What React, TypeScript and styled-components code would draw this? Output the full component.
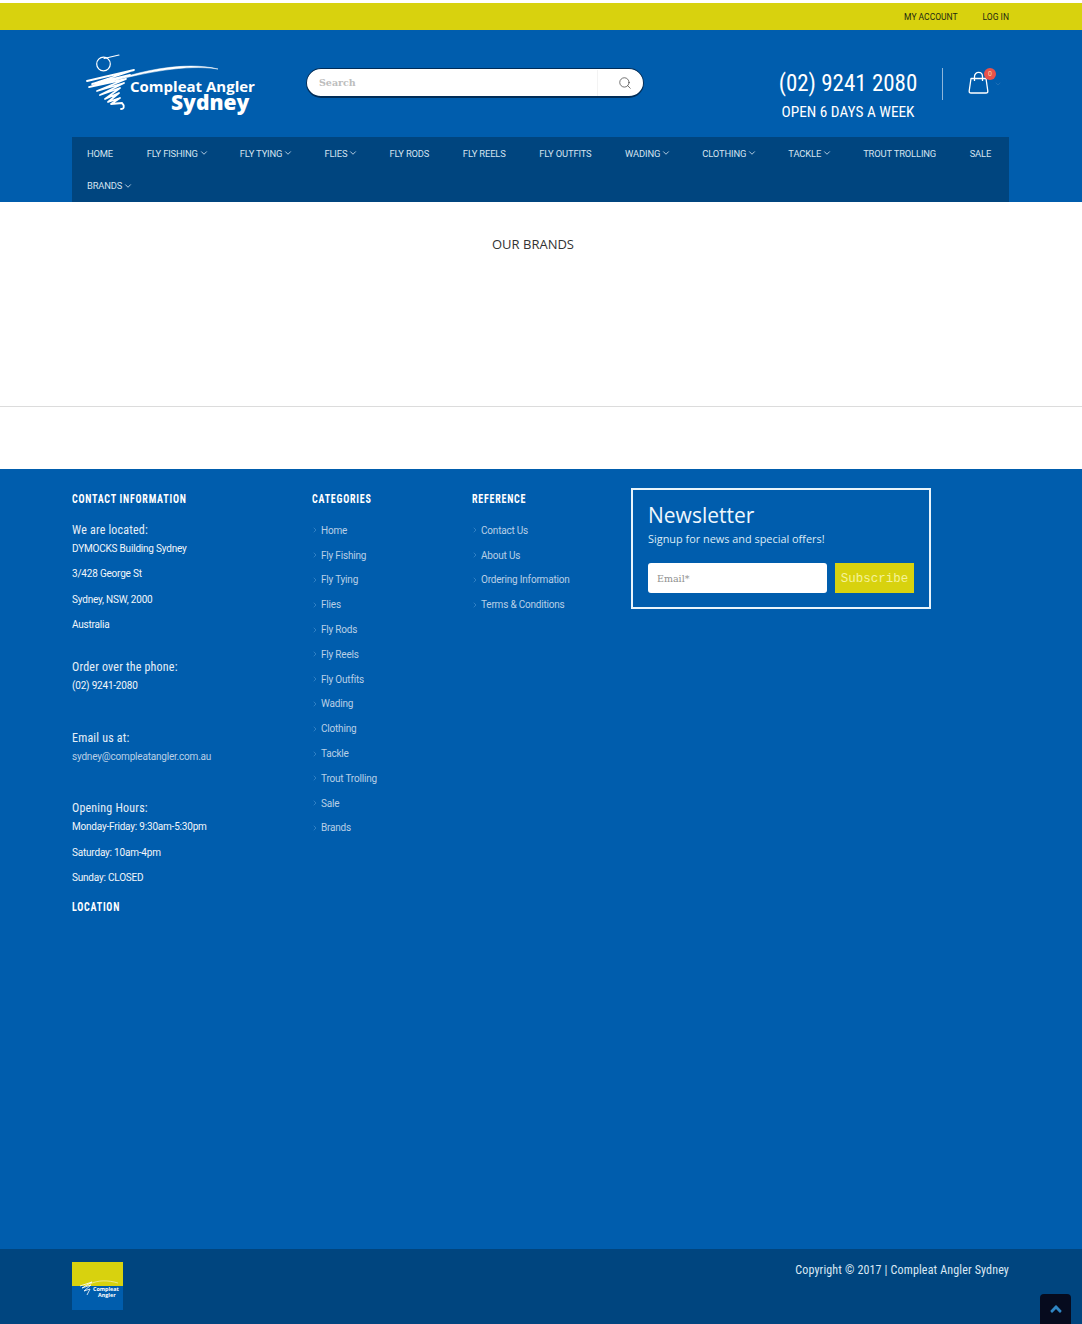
import React from "react";
import styled, {createGlobalStyle} from "styled-components";
import {FaAngleUp} from "react-icons/fa";
import {ChevronDown, ChevronRight, Search} from "lucide-react";

const condensed = `"Roboto Condensed", Roboto, "Liberation Sans", sans-serif`;
const blue = "#005dad";
const navy = "#00457f";

const GlobalStyle = createGlobalStyle`
  html, body {
    margin: 0;
    padding: 0;
    background: #fff;
  }

  body {
    font-family: Roboto, "Liberation Sans", sans-serif;
  }
`;

const Page = styled.div`
  position: relative;
  height: 1324px;
  overflow: hidden;
  padding-top: 3px;
  box-sizing: border-box;
`;

const TopBar = styled.div`
  height: 27px;
  background: #d8d20e;
  padding: 0 73px 0 72px;
  display: flex;
  justify-content: flex-end;
  align-items: center;
  gap: 25px;
`;

const TopLink = styled.a`
  font-size: 8.5px;
  font-weight: 400;
  color: #1c2a12;
  text-transform: uppercase;
`;

const Header = styled.header`
  background: ${blue};
  padding: 0 73px 0 72px;
  height: 172px;
  box-sizing: border-box;
`;

const HeaderRow = styled.div`
  height: 107px;
  display: flex;
  align-items: flex-start;
`;

const LogoSvg = styled.svg`
  width: 200px;
  height: 90px;
  margin-top: 10px;
  flex: none;
`;

const SearchBox = styled.div`
  width: 338px;
  height: 30px;
  margin: 38px 0 0 34px;
  box-sizing: border-box;
  background: #fff;
  border: 1px solid #002c57;
  border-bottom-width: 2px;
  border-radius: 16px;
  display: flex;
  align-items: center;
  flex: none;
`;

const SearchInput = styled.input`
  flex: 1;
  min-width: 0;
  border: 0;
  outline: 0;
  background: transparent;
  padding: 0 0 1px 12px;
  font-family: "DejaVu Serif", "Liberation Serif", serif;
  font-size: 9.5px;

  &::placeholder {
    color: #bdbdbd;
    font-weight: 700;
    opacity: 1;
  }
`;

const SearchButton = styled.div`
  width: 46px;
  height: 26px;
  box-sizing: border-box;
  padding-left: 9px;
  border-left: 1px solid #f3f3f3;
  display: flex;
  align-items: center;
  justify-content: center;
  color: #3a3a3a;
`;

const Phone = styled.div`
  margin-left: auto;
  width: 164px;
  margin-top: 39px;
  text-align: center;
  color: #fff;
  font-family: ${condensed};
`;

const PhoneNumber = styled.div`
  font-size: 23px;
  line-height: 30px;
`;

const OpenDays = styled.div`
  font-size: 15.3px;
  line-height: 20px;
  margin-top: 3px;
`;

const Divider = styled.div`
  width: 1px;
  height: 32px;
  background: #8fb6da;
  margin: 38px 25px 0 12px;
`;

const Cart = styled.div`
  position: relative;
  width: 41px;
  margin-top: 41px;
`;

const CartCount = styled.span`
  position: absolute;
  left: 16px;
  top: -3px;
  width: 12px;
  height: 12px;
  border-radius: 50%;
  background: #e8524a;
  color: #f6d9a8;
  font-size: 7px;
  line-height: 12px;
  text-align: center;
`;

const CartCaret = styled(ChevronDown)`
  position: absolute;
  left: 26px;
  top: 9px;
  color: #2c76b8;
`;

const Nav = styled.nav`
  height: 65px;
  background: ${navy};
`;

const NavList = styled.div`
  display: flex;
  flex-wrap: wrap;
  align-content: flex-start;
  margin-right: -8px;
`;

const NavItem = styled.a`
  height: 32.5px;
  padding: 0 18.6px 0 15px;
  display: flex;
  align-items: center;
  font-size: 9.4px;
  letter-spacing: -0.15px;
  color: #d5e3f0;
  text-transform: uppercase;
  white-space: nowrap;
`;

const NavCaret = styled(ChevronDown)`
  margin: 0 -2.5px 0 1px;
`;

const Brands = styled.section`
  height: 204px;
  border-bottom: 1px solid #dcdcdc;
`;

const BrandsTitle = styled.h2`
  margin: 0;
  padding: 33px 16px 0 0;
  font-family: "Open Sans", sans-serif;
  font-size: 13px;
  line-height: 18px;
  font-weight: 400;
  color: #333;
  text-align: center;
  text-transform: uppercase;
`;

const Spacer = styled.div`
  height: 62px;
`;

const Footer = styled.footer`
  background: ${blue};
  height: 780px;
  box-sizing: border-box;
  padding: 19px 72px 0;
  display: grid;
  grid-template-columns: 240px 160px 159px 300px;
  align-items: start;
`;

const ColumnTitle = styled.h4`
  margin: 0;
  font-family: ${condensed};
  font-size: 13px;
  line-height: 22px;
  font-weight: 700;
  letter-spacing: 1px;
  color: #fff;
  text-transform: uppercase;
  white-space: nowrap;
  transform: scaleX(0.77);
  transform-origin: left center;
`;

const ContactGroup = styled.div<{$after: number}>`
  margin-bottom: ${p => p.$after}px;

  &:first-of-type {
    margin-top: 10.5px;
  }
`;

const ContactLabel = styled.div`
  font-family: ${condensed};
  font-size: 12px;
  line-height: 18px;
  color: #e6eff7;
  letter-spacing: 0.2px;
`;

const ContactLine = styled.p<{$muted?: boolean}>`
  margin: 0 0 6px;
  font-size: 10px;
  letter-spacing: -0.2px;
  line-height: 19.5px;
  color: ${p => (p.$muted ? "#b9cfe6" : "#f2f6fa")};
`;

const LinkList = styled.ul`
  list-style: none;
  margin: 8px 0 0;
  padding: 0;
`;

const LinkRow = styled.li`
  height: 24.8px;
  display: flex;
  align-items: center;
  gap: 2px;
  font-size: 10px;
  letter-spacing: -0.2px;
  color: #b9cfe6;
`;

const LinkCaret = styled(ChevronRight)`
  color: #2f7fc4;
  margin-left: -1px;
`;

const NewsletterBox = styled.div`
  height: 121px;
  box-sizing: border-box;
  border: 2px solid #e8f4fb;
  padding: 10px 15px 0;
`;

const NewsletterTitle = styled.div`
  font-family: "Open Sans", sans-serif;
  font-size: 21px;
  line-height: 30px;
  color: #eef7fd;
`;

const NewsletterText = styled.div`
  font-family: "Open Sans", sans-serif;
  font-size: 10.9px;
  line-height: 18px;
  color: #dcebf6;
`;

const NewsletterForm = styled.div`
  display: flex;
  gap: 8px;
  margin-top: 15px;
`;

const EmailInput = styled.input`
  width: 179px;
  height: 30px;
  box-sizing: border-box;
  border: 0;
  border-radius: 3px;
  background: #fff;
  padding: 0 9px;
  font-family: "DejaVu Serif", "Liberation Serif", serif;
  font-size: 9.5px;

  &::placeholder {
    color: #8f8f8f;
    opacity: 1;
  }
`;

const SubscribeButton = styled.button`
  width: 79px;
  height: 30px;
  border: 0;
  padding: 1px 0 0;
  background: #d8d20e;
  color: #f5f29a;
  font-family: "Liberation Mono", monospace;
  font-size: 12.5px;
`;

const BottomBar = styled.div`
  background: ${navy};
  height: 75px;
  padding: 13px 73px 0 72px;
  box-sizing: border-box;
  display: flex;
  justify-content: space-between;
  align-items: flex-start;
`;

const BadgeSvg = styled.svg`
  width: 51px;
  height: 48px;
  display: block;
`;

const Copyright = styled.div`
  font-family: ${condensed};
  font-size: 12px;
  line-height: 16px;
  color: #dbe8f3;
  letter-spacing: 0.15px;
`;

const ScrollTop = styled.a`
  position: absolute;
  left: 1040px;
  top: 1294px;
  width: 31px;
  height: 34px;
  border-radius: 4px;
  background: #060b1e;
  color: #2f86c4;
  display: flex;
  justify-content: center;
  padding-top: 6px;
  box-sizing: border-box;
  font-size: 18px;
`;

const navItems = [
    {label: "Home"},
    {label: "Fly Fishing", more: true},
    {label: "Fly Tying", more: true},
    {label: "Flies", more: true},
    {label: "Fly Rods"},
    {label: "Fly Reels"},
    {label: "Fly Outfits"},
    {label: "Wading", more: true},
    {label: "Clothing", more: true},
    {label: "Tackle", more: true},
    {label: "Trout Trolling"},
    {label: "Sale"},
    {label: "Brands", more: true},
];

const categories = [
    "Home", "Fly Fishing", "Fly Tying", "Flies", "Fly Rods", "Fly Reels", "Fly Outfits",
    "Wading", "Clothing", "Tackle", "Trout Trolling", "Sale", "Brands",
];

const reference = ["Contact Us", "About Us", "Ordering Information", "Terms & Conditions"];

const Swish = () => (
    <g fill="none" stroke="#fff" strokeLinecap="round">
        <circle cx="33.5" cy="24" r="6.8" strokeWidth="1.2"/>
        <path d="M34 18.5 L49 15" strokeWidth="1.1"/>
        <path
            d="M17 41 L64 30 L22 44 L60 35 L19 47 L56 39 L27 51 L54 43 L30 55 L50 48 L35 59 L49 53 L38 62 L50 58 L41 64 L52 63 C55 66 54 69 51 69"
            strokeWidth="1.8"
            strokeLinejoin="round"
        />
        <path d="M42 41 C70 31 115 21 148 29 C115 24 75 33 42 41 Z" fill="#fff" strokeWidth="0.5"/>
    </g>
);

const App: React.FC = () => {
    return (
        <Page>
            <GlobalStyle/>
            <TopBar>
                <TopLink>My Account</TopLink>
                <TopLink>Log in</TopLink>
            </TopBar>
            <Header>
                <HeaderRow>
                    <LogoSvg viewBox="2 0 200 90">
                        <Swish/>
                        <text x="60" y="52" fill="#fff" fontFamily="'Open Sans', sans-serif" fontWeight="700" fontSize="15">
                            Compleat Angler
                        </text>
                        <text x="101" y="70" fill="#fff" fontFamily="'Open Sans', sans-serif" fontWeight="800" fontSize="21">
                            Sydney
                        </text>
                    </LogoSvg>
                    <SearchBox>
                        <SearchInput placeholder="Search"/>
                        <SearchButton><Search size={14} strokeWidth={1.2}/></SearchButton>
                    </SearchBox>
                    <Phone>
                        <PhoneNumber>(02) 9241 2080</PhoneNumber>
                        <OpenDays>OPEN 6 DAYS A WEEK</OpenDays>
                    </Phone>
                    <Divider/>
                    <Cart>
                        <svg width="21" height="23" viewBox="0 0 21 23" fill="none" stroke="#fff" strokeWidth="1.3">
                            <path d="M3 7.5 H18 L19.8 20 Q20 22 18 22 H3 Q1 22 1.2 20 Z" strokeLinejoin="round"/>
                            <path d="M6.5 10 V5.5 C6.5 0 14.5 0 14.5 5.5 V10"/>
                        </svg>
                        <CartCount>0</CartCount>
                        <CartCaret size={8}/>
                    </Cart>
                </HeaderRow>
                <Nav>
                    <NavList>
                        {navItems.map(item => (
                            <NavItem key={item.label}>
                                {item.label}
                                {item.more && <NavCaret size={10} strokeWidth={2}/>}
                            </NavItem>
                        ))}
                    </NavList>
                </Nav>
            </Header>
            <Brands>
                <BrandsTitle>Our Brands</BrandsTitle>
            </Brands>
            <Spacer/>
            <Footer>
                <div>
                    <ColumnTitle>Contact Information</ColumnTitle>
                    <ContactGroup $after={23.5}>
                        <ContactLabel>We are located:</ContactLabel>
                        <ContactLine>DYMOCKS Building Sydney</ContactLine>
                        <ContactLine>3/428 George St</ContactLine>
                        <ContactLine>Sydney, NSW, 2000</ContactLine>
                        <ContactLine>Australia</ContactLine>
                    </ContactGroup>
                    <ContactGroup $after={33}>
                        <ContactLabel>Order over the phone:</ContactLabel>
                        <ContactLine>(02) 9241-2080</ContactLine>
                    </ContactGroup>
                    <ContactGroup $after={33}>
                        <ContactLabel>Email us at:</ContactLabel>
                        <ContactLine $muted>sydney@compleatangler.com.au</ContactLine>
                    </ContactGroup>
                    <ContactGroup $after={8.5}>
                        <ContactLabel>Opening Hours:</ContactLabel>
                        <ContactLine>Monday-Friday: 9:30am-5:30pm</ContactLine>
                        <ContactLine>Saturday: 10am-4pm</ContactLine>
                        <ContactLine>Sunday: CLOSED</ContactLine>
                    </ContactGroup>
                    <ColumnTitle>Location</ColumnTitle>
                </div>
                <div>
                    <ColumnTitle>Categories</ColumnTitle>
                    <LinkList>
                        {categories.map(name => (
                            <LinkRow key={name}><LinkCaret size={8} strokeWidth={3}/>{name}</LinkRow>
                        ))}
                    </LinkList>
                </div>
                <div>
                    <ColumnTitle>Reference</ColumnTitle>
                    <LinkList>
                        {reference.map(name => (
                            <LinkRow key={name}><LinkCaret size={8} strokeWidth={3}/>{name}</LinkRow>
                        ))}
                    </LinkList>
                </div>
                <NewsletterBox>
                    <NewsletterTitle>Newsletter</NewsletterTitle>
                    <NewsletterText>Signup for news and special offers!</NewsletterText>
                    <NewsletterForm>
                        <EmailInput placeholder="Email*"/>
                        <SubscribeButton>Subscribe</SubscribeButton>
                    </NewsletterForm>
                </NewsletterBox>
            </Footer>
            <BottomBar>
                <BadgeSvg viewBox="0 0 51 48">
                    <rect width="51" height="24" fill="#d8d20e"/>
                    <rect y="24" width="51" height="24" fill={blue}/>
                    <path d="M8 24 L20 20 L10 26 L19 23 L12 29 L18 27 L15 33" fill="none" stroke="#fff" strokeWidth="0.8"/>
                    <path d="M18 22 C26 18 36 18 46 21" fill="none" stroke="#fff" strokeWidth="0.5"/>
                    <text x="21" y="29" fill="#fff" fontFamily="'Open Sans', sans-serif" fontWeight="700" fontSize="5.4">Compleat</text>
                    <text x="26" y="35" fill="#fff" fontFamily="'Open Sans', sans-serif" fontWeight="700" fontSize="5.4">Angler</text>
                </BadgeSvg>
                <Copyright>Copyright © 2017 | Compleat Angler Sydney</Copyright>
            </BottomBar>
            <ScrollTop><FaAngleUp/></ScrollTop>
        </Page>
    );
};

export default App;
